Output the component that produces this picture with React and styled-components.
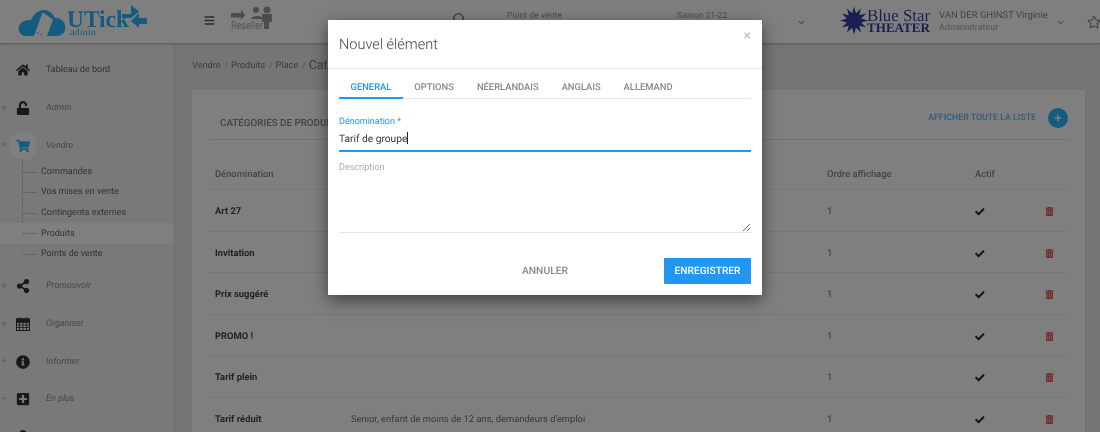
import React from 'react'
import styled, { createGlobalStyle } from 'styled-components'
import {
  FaHome, FaUnlock, FaShoppingCart, FaShareAlt, FaInfoCircle, FaPlusSquare,
  FaUser, FaCheck, FaTrashAlt, FaRegStar, FaBars, FaPlus, FaChevronDown,
} from 'react-icons/fa'
import { FiSearch } from 'react-icons/fi'

const Global = createGlobalStyle`
html, body { margin: 0; padding: 0; height: 432px; overflow: hidden; background: #ebebeb; }
body { font-family: Roboto, "Liberation Sans", sans-serif; color: #555; text-rendering: geometricPrecision; }
* { box-sizing: border-box; }
`

const Page = styled.div`
width: 1100px;
height: 432px;
display: flex;
flex-direction: column;
overflow: hidden;
filter: blur(.3px);
`
const Header = styled.header`
height: 44px;
flex: none;
display: flex;
align-items: center;
background: #fff;
border-bottom: 1px solid #c4c4c4;
box-shadow: 0 1px 2px rgba(0,0,0,.15);
z-index: 1;
`
const Brand = styled.div`
width: 204px;
flex: none;
height: 44px;
`
const Burger = styled.div`
width: 27px;
flex: none;
font-size: 11px;
color: #555;
display: flex;
margin-top: -3px;
`
const ResellerBox = styled.div`
width: 226px;
flex: none;
height: 44px;
`
const SearchBox = styled.div`
width: 55px;
flex: none;
font-size: 14px;
color: #444;
display: flex;
margin-top: -5px;
margin-left: -5px;
`
const Select = styled.div`
flex: none;
width: ${p => p.$w}px;
height: 44px;
padding-top: 11px;
font-size: 8.700px;
color: #999;
`
const SmallChevron = styled.div`
flex: none;
width: ${p => p.$w}px;
font-size: 7px;
color: #999;
display: flex;
margin-top: 1px;
`
const TheaterLogo = styled.div`
flex: none;
width: 102px;
height: 44px;
`
const UserBox = styled.div`
flex: none;
width: 118px;
padding-top: 1px;
`
const UserName = styled.div`
font-size: 9.500px;
color: #888;
line-height: 12px;
white-space: nowrap;
`
const UserRole = styled.div`
font-size: 9px;
color: #aaa;
line-height: 12px;
`
const StarBtn = styled.div`
flex: none;
font-size: 14px;
color: #888;
display: flex;
margin-left: 23px;
`

const Body = styled.div`
flex: 1;
display: flex;
min-height: 0;
`
const Sidebar = styled.aside`
width: 175px;
flex: none;
background: #f3f3f3;
border-right: 1px solid #dcdcdc;
padding-top: 7.500px;
overflow: hidden;
`
const NavItem = styled.div`
height: 37.700px;
display: flex;
align-items: center;
position: relative;
`
const Toggle = styled.span`
width: 16px;
flex: none;
text-align: left;
padding-left: 1px;
font-size: 10px;
color: #bbb;
`
const IconWrap = styled.span`
width: 28px;
height: 28px;
flex: none;
display: flex;
align-items: center;
justify-content: center;
font-size: 14px;
color: ${p => (p.$active ? '#2ab4ff' : '#333')};
background: ${p => (p.$active ? '#ffffff' : 'transparent')};
border-radius: 50%;
margin-left: -7px;
margin-right: 9px;
`
const NavLabel = styled.span`
font-size: 9px;
color: ${p => (p.$plain ? '#666' : '#8e8e8e')};
font-style: ${p => (p.$plain ? 'normal' : 'italic')};
`
const SubList = styled.div`
position: relative;
margin-bottom: 3px;
margin-top: -3px;
`
const SubItem = styled.div`
height: 20.600px;
display: flex;
align-items: center;
padding-left: 41px;
font-size: 9px;
color: #666;
position: relative;
background: ${p => (p.$active ? '#ffffff' : 'transparent')};
&::before {
  content: "";
  position: absolute;
  left: 23px;
  top: 10px;
  width: 14px;
  border-top: 1px dotted #aaa;
}
`
const TreeLine = styled.div`
position: absolute;
left: 22px;
top: -3px;
height: 85px;
border-left: 1px dotted #aaa;
`

const Main = styled.main`
flex: 1;
padding: 0 15px 0 17px;
overflow: hidden;
`
const Breadcrumb = styled.div`
height: 46px;
display: flex;
align-items: center;
font-size: 9.200px;
color: #777;
padding-bottom: 3px;
`
const Sep = styled.span`
margin: 0 3px 0 4px;
color: #999;
font-size: 8px;
`
const Current = styled.span`
font-size: 12.500px;
color: #777;
`
const Card = styled.section`
background: #fff;
padding: 0 17px;
box-shadow: 0 1px 2px rgba(0,0,0,.1);
`
const CardHead = styled.div`
height: 50px;
display: flex;
align-items: center;
justify-content: space-between;
border-bottom: 1px solid #e6e6e6;
padding: 0 0 0 11px;
`
const CardTitle = styled.h2`
margin: 18px 0 0;
font-size: 9.800px;
font-weight: 500;
color: #888;
`
const HeadRight = styled.div`
display: flex;
align-items: center;
margin-top: 6px;
`
const ListLink = styled.span`
font-size: 8.800px;
font-weight: 500;
color: #58b8ff;
margin-top: 1px;
`
const RoundBtn = styled.span`
width: 20px;
height: 20px;
margin-left: 12px;
border-radius: 50%;
background: #2ab4ff;
color: #fff;
font-size: 8px;
display: flex;
align-items: center;
justify-content: center;
`
const Row = styled.div`
display: grid;
grid-template-columns: 136px 476px 148px 70px 1fr;
align-items: center;
height: ${p => (p.$head ? 50 : 41.5)}px;
padding-left: 6px;
padding-top: ${p => (p.$head ? 20 : 3)}px;
border-bottom: 1px solid #eee;
font-size: 9.400px;
color: #707070;
`
const HeadCell = styled.span`
font-weight: 500;
color: #888;
`
const NameCell = styled.span`
font-weight: 700;
color: #444;
`
const Check = styled.span`
font-size: 9.500px;
color: #222;
display: flex;
`
const Trash = styled.span`
font-size: 9px;
color: #e85050;
display: flex;
`

const Backdrop = styled.div`
position: fixed;
inset: 0;
background: rgba(0,0,0,.5);
padding: 20px 0 0 328px;
z-index: 5;
`
const Modal = styled.div`
width: 434px;
height: 275px;
background: #fff;
box-shadow: 0 5px 15px rgba(0,0,0,.5);
position: relative;
`
const ModalHead = styled.div`
height: 49px;
display: flex;
align-items: center;
padding: 0 11px;
border-bottom: 1px solid #e8e8e8;
`
const ModalTitle = styled.h3`
margin: 0;
font-size: 14.500px;
font-weight: 300;
color: #444;
`
const Close = styled.span`
position: absolute;
right: 11px;
top: 8px;
font-size: 14px;
color: #bbb;
`
const ModalBody = styled.div`
padding: 0 11px;
`
const Tabs = styled.div`
display: flex;
height: 30px;
border-bottom: 1px solid #e8e8e8;
`
const Tab = styled.span`
height: 30px;
padding: 5px 11.500px 0;
line-height: 27px;
font-size: 9.400px;
font-weight: 500;
color: ${p => (p.$active ? '#2196f3' : '#888')};
border-bottom: 2px solid ${p => (p.$active ? '#2196f3' : 'transparent')};
`
const FieldLabel = styled.label`
display: block;
margin-top: 17px;
font-size: 9px;
line-height: 12px;
color: #2196f3;
`
const InputText = styled.div`
height: 24px;
padding-top: 4px;
font-size: 10.200px;
line-height: 16px;
color: #333;
border-bottom: 2px solid #2196f3;
`
const Caret = styled.span`
display: inline-block;
width: 1px;
height: 12px;
background: #222;
vertical-align: -2px;
`
const DescArea = styled.textarea`
display: block;
width: 100%;
height: 75px;
margin-top: 6px;
padding: 3px 0;
border: 0;
border-bottom: 1px solid #e6e6e6;
outline: 0;
font-family: inherit;
font-size: 9px;
line-height: 12px;
resize: vertical;
background: transparent;
&::placeholder { color: #aaa; opacity: 1; }
`
const Actions = styled.div`
display: flex;
justify-content: flex-end;
align-items: center;
margin-top: 25px;
`
const CancelBtn = styled.span`
font-size: 10.300px;
font-weight: 500;
color: #888;
margin: -2px 96px 0 0;
`
const SaveBtn = styled.span`
width: 87px;
height: 26px;
background: #2196f3;
color: #fff;
font-size: 10.200px;
font-weight: 500;
border-radius: 1px;
display: flex;
align-items: center;
justify-content: center;
`

const rows = [
  ['Art 27', ''],
  ['Invitation', ''],
  ['Prix suggéré', ''],
  ['PROMO !', ''],
  ['Tarif plein', ''],
  ['Tarif réduit', "Senior, enfant de moins de 12 ans, demandeurs d'emploi"],
]
const subs = ['Commandes', 'Vos mises en vente', 'Contingents externes', 'Produits', 'Points de vente']
const tabs = ['GENERAL', 'OPTIONS', 'NÉERLANDAIS', 'ANGLAIS', 'ALLEMAND']

function UtickLogo() {
  return (
    <svg width="150" height="44" viewBox="0 0 150 44">
      <path fill="#2ab4ff" d="M26 36C18 36 16 25 23 21.500C26 20 29 20 31 20C34 12 43 7 50 12C53 14 54 16 55 18C62 17.500 67 24 65 30C64 34 60 36 56 36Z" />
      <path fill="#fff" d="M34 36L42.500 12.500L46 14.500L53 19.500L47 36Z" />
      <path fill="none" stroke="#2ab4ff" strokeWidth="1" strokeDasharray="2 2" d="M33 31L43 35" />
      <text x="67" y="27" fontFamily="Liberation Serif" fontWeight="700" fontSize="24" fill="#2ab4ff" textLength="62" lengthAdjust="spacingAndGlyphs">UTick</text>
      <text x="70" y="35" fontFamily="Liberation Serif" fontSize="9.500" fill="#2ab4ff" textLength="26" lengthAdjust="spacingAndGlyphs">admin</text>
      <path fill="#2ab4ff" d="M122 14H131V5L139 11.500L131 18H122Z" />
      <path fill="#2ab4ff" d="M147 18H139V13L131 21L139 28V24H147Z" />
    </svg>
  )
}

function ResellerLogo() {
  return (
    <svg width="100" height="44" viewBox="0 0 100 44">
      <path fill="#999" d="M0 13H10V9.500L14 15L10 20V17.500H0Z" />
      <circle cx="25" cy="10" r="3" fill="#999" />
      <circle cx="36" cy="10" r="3.500" fill="#999" />
      <path fill="#999" d="M20 19C20 15 32 15 32 19Z" />
      <path fill="#999" d="M31 14H41V22H38V29H33V22H31Z" />
      <text x="0" y="29" fontFamily="Roboto" fontSize="11" fill="#aaa" textLength="32" lengthAdjust="spacingAndGlyphs">Reseller</text>
    </svg>
  )
}

function BlueStarLogo() {
  const pts = []
  for (let i = 0; i < 24; i++) {
    const r = i % 2 === 0 ? 14 : 7.500
    const a = (i * Math.PI) / 12 - Math.PI / 2
    pts.push(`${(15 + 2 + r * Math.cos(a)).toFixed(1)},${(20.500 + r * Math.sin(a)).toFixed(1)}`)
  }
  return (
    <svg width="100" height="44" viewBox="0 0 100 44">
      <polygon points={pts.join(' ')} fill="#343fa0" />
      <text x="30" y="21" fontFamily="Liberation Serif" fontSize="17" fill="#343fa0" textLength="63" lengthAdjust="spacingAndGlyphs">Blue Star</text>
      <text x="30" y="32" fontFamily="Liberation Serif" fontWeight="700" fontSize="13" fill="#343fa0" textLength="63" lengthAdjust="spacingAndGlyphs">THEATER</text>
    </svg>
  )
}

function CalendarIcon() {
  return (
    <svg width="14" height="14" viewBox="0 0 14 14" fill="none" stroke="currentColor">
      <rect x=".5" y="2" width="13" height="11.500" />
      <path d="M.5 5.500H13.500M.5 8H13.500M.5 10.500H13.500M3.500 5.500V13.500M7 5.500V13.500M10.500 5.500V13.500" strokeWidth=".8" />
      <path d="M3.500 .5V3.500M10.500 .5V3.500" strokeWidth="1.500" />
      <rect x=".5" y="2" width="13" height="3" fill="currentColor" />
    </svg>
  )
}

function Nav({ icon: Icon, label, sign = '+', plain, active }) {
  return (
    <NavItem>
      <Toggle>{sign}</Toggle>
      <IconWrap $active={active}><Icon /></IconWrap>
      {label && <NavLabel $plain={plain}>{label}</NavLabel>}
    </NavItem>
  )
}

export default function App() {
  return (
    <Page>
      <Global />
      <Header>
        <Brand><UtickLogo /></Brand>
        <Burger><FaBars /></Burger>
        <ResellerBox><ResellerLogo /></ResellerBox>
        <SearchBox><FiSearch /></SearchBox>
        <Select $w={170}>Point de vente</Select>
        <Select $w={121}>Saison 21-22</Select>
        <SmallChevron $w={39}><FaChevronDown /></SmallChevron>
        <TheaterLogo><BlueStarLogo /></TheaterLogo>
        <UserBox>
          <UserName>VAN DER GHINST Virginie</UserName>
          <UserRole>Administrateur</UserRole>
        </UserBox>
        <SmallChevron $w={7}><FaChevronDown /></SmallChevron>
        <StarBtn><FaRegStar /></StarBtn>
      </Header>
      <Body>
        <Sidebar>
          <Nav icon={FaHome} label="Tableau de bord" sign="" plain />
          <Nav icon={FaUnlock} label="Admin" />
          <Nav icon={FaShoppingCart} label="Vendre" sign="×" active />
          <SubList>
            <TreeLine />
            {subs.map(s => <SubItem key={s} $active={s === 'Produits'}>{s}</SubItem>)}
          </SubList>
          <Nav icon={FaShareAlt} label="Promouvoir" />
          <Nav icon={CalendarIcon} label="Organiser" />
          <Nav icon={FaInfoCircle} label="Informer" />
          <Nav icon={FaPlusSquare} label="En plus" />
          <Nav icon={FaUser} sign="" />
        </Sidebar>
        <Main>
          <Breadcrumb>
            Vendre<Sep>/</Sep>Produits<Sep>/</Sep>Place<Sep>/</Sep><Current>Catégories de produits</Current>
          </Breadcrumb>
          <Card>
            <CardHead>
              <CardTitle>CATÉGORIES DE PRODUITS</CardTitle>
              <HeadRight>
                <ListLink>AFFICHER TOUTE LA LISTE</ListLink>
                <RoundBtn><FaPlus /></RoundBtn>
              </HeadRight>
            </CardHead>
            <Row $head>
              <HeadCell>Dénomination</HeadCell>
              <HeadCell>Description</HeadCell>
              <HeadCell>Ordre affichage</HeadCell>
              <HeadCell>Actif</HeadCell>
              <span />
            </Row>
            {rows.map(([name, desc]) => (
              <Row key={name}>
                <NameCell>{name}</NameCell>
                <span>{desc}</span>
                <span>1</span>
                <Check><FaCheck /></Check>
                <Trash><FaTrashAlt /></Trash>
              </Row>
            ))}
          </Card>
        </Main>
      </Body>
      <Backdrop>
        <Modal>
          <ModalHead>
            <ModalTitle>Nouvel élément</ModalTitle>
            <Close>×</Close>
          </ModalHead>
          <ModalBody>
            <Tabs>
              {tabs.map((t, i) => <Tab key={t} $active={i === 0}>{t}</Tab>)}
            </Tabs>
            <FieldLabel>Dénomination *</FieldLabel>
            <InputText>Tarif de groupe<Caret /></InputText>
            <DescArea placeholder="Description" readOnly />
            <Actions>
              <CancelBtn>ANNULER</CancelBtn>
              <SaveBtn>ENREGISTRER</SaveBtn>
            </Actions>
          </ModalBody>
        </Modal>
      </Backdrop>
    </Page>
  )
}
